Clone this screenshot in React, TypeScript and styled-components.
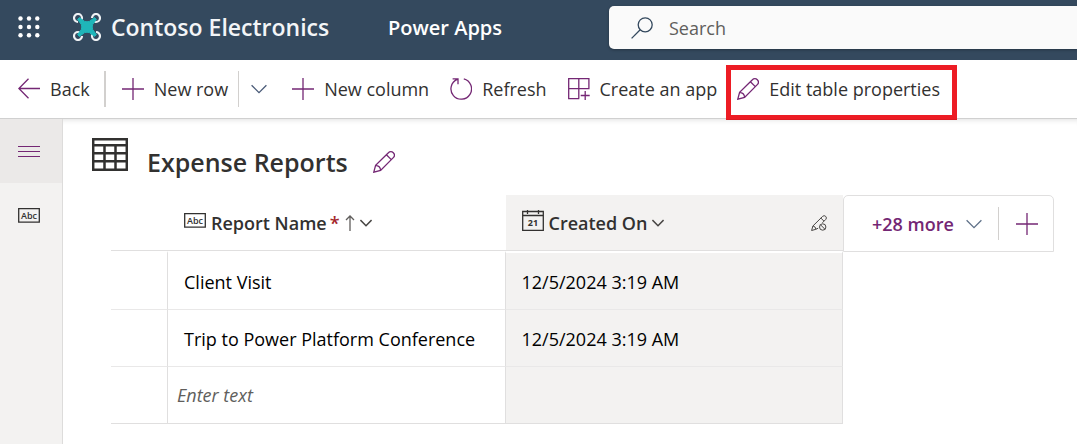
import React from "react";
import styled, { createGlobalStyle } from "styled-components";

const GlobalStyle = createGlobalStyle`
  * { box-sizing: border-box; }
  body {
    margin: 0;
    background: #ffffff;
    color: #323130;
    font-family: "Segoe UI", "Open Sans", "Noto Sans", sans-serif;
    font-size: 18px;
    line-height: 24px;
  }
  button, input { font: inherit; color: inherit; }
  button { border: 0; padding: 0; background: none; cursor: pointer; }
`;

const accent = "#742774";
const line = "#e0dfdf";

/* ---------- icons ---------- */

const Icon = styled.svg<{ $w?: number; $h?: number; $color?: string; $weight?: number }>`
  display: block;
  flex: none;
  width: ${(p) => p.$w ?? 22}px;
  height: ${(p) => p.$h ?? p.$w ?? 22}px;
  color: ${(p) => p.$color ?? accent};
  fill: none;
  stroke: currentColor;
  stroke-width: ${(p) => p.$weight ?? 1.3};
`;

const WaffleIcon = () => (
  <Icon viewBox="0 0 22 22" $color="#ffffff" aria-hidden="true">
    <g fill="currentColor" stroke="none">
      {[2.5, 11, 19.3].map((y) =>
        [2.5, 11, 19.3].map((x) => <circle key={`${x}-${y}`} cx={x} cy={y} r="2.2" />)
      )}
    </g>
  </Icon>
);

const DroneLogo = () => (
  <Icon viewBox="0 0 28 28" $w={28} $color="#eef1f4" aria-hidden="true">
    {[0, 90, 180, 270].map((angle) => (
      <path
        key={angle}
        d="M5 9A4 4 0 1 1 9 5Q9 6.2 8.2 7.2"
        strokeWidth="2.2"
        transform={`rotate(${angle} 14 14)`}
      />
    ))}
    <path
      d="M4.6 6.4 6.4 4.6 11.6 8.4Q14 9.2 16.4 8.4L21.6 4.6 23.4 6.4 19.6 11.6Q18.8 14 19.6 16.4L23.4 21.6 21.6 23.4 16.4 19.6Q14 18.8 11.6 19.6L6.4 23.4 4.6 21.6 8.4 16.4Q9.2 14 8.4 11.6Z"
      fill="#1fb5b9"
      stroke="#1fb5b9"
      strokeWidth="1"
      strokeLinejoin="round"
    />
  </Icon>
);

const SearchIcon = () => (
  <Icon viewBox="0 0 22 22" $color="#34495e" aria-hidden="true">
    <circle cx="14.2" cy="7.8" r="7" />
    <path d="M9.2 12.8.6 21.4" />
  </Icon>
);

const BackIcon = () => (
  <Icon viewBox="0 0 22 22" aria-hidden="true">
    <path d="M22 10.5H1M10.5.8.9 10.5l9.6 9.7" />
  </Icon>
);

const PlusIcon = () => (
  <Icon viewBox="0 0 22 22" aria-hidden="true">
    <path d="M11 0v22M0 11h22" />
  </Icon>
);

const ChevronIcon = ({ size = 16, color = "#4a5b78", weight = 1.3 }) => (
  <Icon viewBox="0 0 16 16" $w={size} $color={color} $weight={weight} aria-hidden="true">
    <path d="M.6 4.2 8 11.6l7.4-7.4" />
  </Icon>
);

const RefreshIcon = () => (
  <Icon viewBox="0 0 22 22" aria-hidden="true">
    <path d="M13.8.9A10.3 10.3 0 1 1 7.2 1.4M2.6.9h5.4v5.4" />
  </Icon>
);

const AppIcon = () => (
  <Icon viewBox="0 0 22 22" aria-hidden="true">
    <path d="M11.3 20.6H.7V.7h20.2v10.6M.7 10.7h20.2M10.8.7v19.9M17.2 13v9M12.7 17.5h9" />
  </Icon>
);

const PencilIcon = () => (
  <Icon viewBox="0 0 22 22" aria-hidden="true">
    <path d="M.8 21.2 2.6 14.4 15.4 1.7a3.4 3.4 0 0 1 4.9 0 3.5 3.5 0 0 1 0 4.9L7.6 19.4ZM13.4 3.7l4.9 4.9M2.6 14.4c2.7.2 4.8 2.2 5 5" />
  </Icon>
);

const MenuIcon = () => (
  <Icon viewBox="0 0 22 12" $h={12} $weight={1} aria-hidden="true">
    <path d="M0 1.5h22M0 6.5h22M0 11.5h22" />
  </Icon>
);

const TableIcon = () => (
  <Icon viewBox="0 0 36 34" $w={36} $h={34} $color="#323130" $weight={2.5} aria-hidden="true">
    <path d="M1.2 1.2h33.6v30.6H1.2ZM1 7.2h34M1 15.2h34M1 23.2h34M12.5 7v25M23.5 7v25" />
  </Icon>
);

const TextIcon = () => (
  <Icon viewBox="0 0 22 15" $h={15} $color="#323130" aria-hidden="true">
    <path d="M.7.7h20.6v13.4H.7Z" />
    <text x="11" y="11" textAnchor="middle" fontSize="9" fontWeight="600" fill="currentColor" stroke="none">
      Abc
    </text>
  </Icon>
);

const CalendarIcon = () => (
  <Icon viewBox="0 0 22 22" $color="#323130" aria-hidden="true">
    <path d="M.7 2.5h20.6v18.8H.7ZM.7 6.5h20.6M5.5 1v4M16.5 1v4" />
    <text x="11" y="17" textAnchor="middle" fontSize="9" fontWeight="700" fill="currentColor" stroke="none">
      21
    </text>
  </Icon>
);

const SortUpIcon = () => (
  <Icon viewBox="0 0 10 16" $w={10} $h={16} $color="#605e5c" aria-hidden="true">
    <path d="M5 16V1M1 5l4-4 4 4" />
  </Icon>
);

const ReadOnlyIcon = () => (
  <Icon viewBox="0 0 16 16" $w={16} $color="#484644" $weight={1} aria-hidden="true">
    <path d="M7.2 13.2 4.8 14.3.6 15.5 1.9 11 11.6 1.4a2.2 2.2 0 0 1 3.1 0 2.2 2.2 0 0 1 0 3.1L11.4 7.8M9.9 3.1l3.1 3.1M1.9 11c1.6.2 2.8 1.4 2.9 3.3" />
    <circle cx="11.7" cy="12" r="3.2" />
    <path d="m9.5 9.8 4.4 4.4" />
  </Icon>
);

/* ---------- top bar ---------- */

const TopBar = styled.header`
  display: flex;
  align-items: center;
  height: 60px;
  padding-left: 18px;
  background: #34495e;
  color: #ffffff;
`;

const Waffle = styled.button`
  margin-right: 33px;
  padding-bottom: 6px;
`;

const Brand = styled.a`
  display: flex;
  align-items: center;
  gap: 10px;
  width: 315px;
  padding-bottom: 6px;
  color: #f3f5f7;
  font-size: 23px;
  font-weight: 600;
  line-height: 32px;
  text-decoration: none;
  white-space: nowrap;
`;

const Product = styled.a`
  width: 221px;
  padding-bottom: 4px;
  color: #ffffff;
  font-size: 20px;
  font-weight: 600;
  line-height: 28px;
  text-decoration: none;
  white-space: nowrap;
`;

const SearchBox = styled.label`
  display: flex;
  flex: 1;
  align-items: center;
  gap: 16px;
  height: 43px;
  margin-bottom: 5px;
  padding-left: 22px;
  border-radius: 5px 0 0 5px;
  background: #fafafa;
  box-shadow: 0 1px 3px rgba(0, 0, 0, 0.3);
`;

const SearchInput = styled.input`
  flex: 1;
  min-width: 0;
  padding: 0;
  border: 0;
  outline: 0;
  background: transparent;
  color: #323130;
  &::placeholder { color: #605e5c; opacity: 1; }
`;

/* ---------- command bar ---------- */

const CommandBar = styled.nav`
  display: flex;
  align-items: center;
  height: 59px;
  padding-left: 7px;
  border-bottom: 1px solid #d0d0d0;
`;

const Command = styled.button`
  display: flex;
  flex: none;
  align-items: center;
  gap: 10px;
  height: 45px;
  padding: 0 10px 0 11px;
  white-space: nowrap;
`;

const SplitCommand = styled(Command)`
  padding: 0 14px 0 12px;
`;

const MarkedCommand = styled(Command)`
  margin: 8px 0 2px 4px;
  padding: 0 12px 6px 6px;
  outline: 5px solid #ed1c24;
`;

const Divider = styled.span<{ $h?: number }>`
  flex: none;
  width: 1px;
  height: ${(p) => p.$h ?? 36}px;
  background: #d2d0ce;
`;

const GroupDivider = styled(Divider)`
  width: 2px;
  margin: 0 5px 0 4px;
`;

/* ---------- body ---------- */

const Body = styled.div`
  display: flex;
  min-height: calc(100vh - 119px);
`;

const Rail = styled.aside`
  flex: none;
  width: 63px;
  border-right: 1px solid #dddcdb;
  background: #f3f2f1;
`;

const RailButton = styled.button<{ $active?: boolean }>`
  display: flex;
  align-items: center;
  justify-content: center;
  width: 100%;
  height: 64px;
  padding-right: 4px;
  background: ${(p) => (p.$active ? "#ebe9e8" : "transparent")};
`;

const Main = styled.main`
  flex: 1;
  min-width: 0;
  padding: 19px 23px 20px 29px;
  box-shadow: inset 0 6px 6px -6px rgba(0, 0, 0, 0.16);
`;

const TitleRow = styled.div`
  display: flex;
  align-items: flex-start;
  height: 57px;
`;

const Title = styled.h1`
  margin: 6px 25px 0 19px;
  font-size: 25px;
  font-weight: 600;
  line-height: 36px;
  white-space: nowrap;
`;

const TitleEdit = styled.button`
  margin-top: 13px;
`;

const GridArea = styled.div`
  display: flex;
  align-items: flex-start;
  padding-left: 19px;
`;

const Table = styled.table`
  flex: 1;
  width: 0;
  table-layout: fixed;
  border-collapse: separate;
  border-spacing: 0;
`;

const SelectCol = styled.col`
  width: 57px;
`;

const HeadCell = styled.th<{ $shaded?: boolean }>`
  height: 56px;
  padding: 0 16px;
  border-bottom: 1px solid ${line};
  background: ${(p) => (p.$shaded ? "#f3f2f1" : "#ffffff")};
  font-weight: 600;
  text-align: left;
`;

const HeadContent = styled.div`
  display: flex;
  align-items: center;
  gap: 5px;
  white-space: nowrap;
`;

const HeadIcon = styled.span`
  padding-bottom: 5px;
`;

const Required = styled.span`
  margin-left: -2px;
  color: #a4262c;
`;

const HeadEnd = styled.span`
  margin-left: auto;
`;

const Cell = styled.td<{ $shaded?: boolean }>`
  height: 57px;
  padding: 2px 16px 0;
  border-right: 1px solid ${line};
  border-bottom: 1px solid #e9e8e8;
  background: ${(p) => (p.$shaded ? "#f3f2f1" : "#ffffff")};
  color: #000000;
  white-space: nowrap;
  tr:first-child > & { height: 59px; border-top: 2px solid #ffffff; }
  tr:last-child > & { border-bottom-color: ${line}; }
`;

const NewCell = styled(Cell)`
  padding: 0 9px;
`;

const CellInput = styled.input`
  display: block;
  width: 100%;
  padding: 0;
  border: 0;
  outline: 0;
  background: transparent;
  &::placeholder { color: #605e5c; font-style: italic; opacity: 1; }
`;

const MorePanel = styled.div`
  display: flex;
  flex: none;
  align-items: center;
  width: 211px;
  height: 57px;
  border: 1px solid ${line};
  border-radius: 5px 5px 0 0;
`;

const MoreButton = styled.button`
  display: flex;
  flex: 1;
  align-items: center;
  justify-content: space-between;
  padding: 0 16px 0 28px;
  color: ${accent};
  font-weight: 600;
  white-space: nowrap;
`;

const AddButton = styled.button`
  padding: 0 15px 0 17px;
`;

const rows = [
  { name: "Client Visit", created: "12/5/2024 3:19 AM" },
  { name: "Trip to Power Platform Conference", created: "12/5/2024 3:19 AM" },
];

export default function App() {
  return (
    <>
      <GlobalStyle />
      <TopBar>
        <Waffle aria-label="App launcher"><WaffleIcon /></Waffle>
        <Brand href="#"><DroneLogo />Contoso Electronics</Brand>
        <Product href="#">Power Apps</Product>
        <SearchBox>
          <SearchIcon />
          <SearchInput type="search" placeholder="Search" aria-label="Search" />
        </SearchBox>
      </TopBar>

      <CommandBar aria-label="Commands">
        <Command><BackIcon />Back</Command>
        <GroupDivider />
        <Command><PlusIcon />New row</Command>
        <Divider />
        <SplitCommand aria-label="More row options"><ChevronIcon /></SplitCommand>
        <Command><PlusIcon />New column</Command>
        <Command><RefreshIcon />Refresh</Command>
        <Command><AppIcon />Create an app</Command>
        <MarkedCommand><PencilIcon />Edit table properties</MarkedCommand>
      </CommandBar>

      <Body>
        <Rail>
          <RailButton $active aria-label="Menu"><MenuIcon /></RailButton>
          <RailButton aria-label="Columns"><TextIcon /></RailButton>
        </Rail>
        <Main>
          <TitleRow>
            <TableIcon />
            <Title>Expense Reports</Title>
            <TitleEdit aria-label="Edit table name"><PencilIcon /></TitleEdit>
          </TitleRow>
          <GridArea>
            <Table>
              <colgroup>
                <SelectCol />
                <col />
                <col />
              </colgroup>
              <thead>
                <tr>
                  <HeadCell aria-label="Select" />
                  <HeadCell>
                    <HeadContent>
                      <HeadIcon><TextIcon /></HeadIcon>
                      <span>Report Name</span>
                      <Required>*</Required>
                      <SortUpIcon />
                      <ChevronIcon size={12} color="#484644" weight={2} />
                    </HeadContent>
                  </HeadCell>
                  <HeadCell $shaded>
                    <HeadContent>
                      <HeadIcon><CalendarIcon /></HeadIcon>
                      <span>Created On</span>
                      <ChevronIcon size={12} color="#484644" weight={2} />
                      <HeadEnd><ReadOnlyIcon /></HeadEnd>
                    </HeadContent>
                  </HeadCell>
                </tr>
              </thead>
              <tbody>
                {rows.map((row) => (
                  <tr key={row.name}>
                    <Cell />
                    <Cell>{row.name}</Cell>
                    <Cell $shaded>{row.created}</Cell>
                  </tr>
                ))}
                <tr>
                  <Cell />
                  <NewCell><CellInput placeholder="Enter text" aria-label="Report Name" /></NewCell>
                  <Cell $shaded />
                </tr>
              </tbody>
            </Table>
            <MorePanel>
              <MoreButton>+28 more<ChevronIcon color="#5f7188" /></MoreButton>
              <Divider $h={33} />
              <AddButton aria-label="Add column"><PlusIcon /></AddButton>
            </MorePanel>
          </GridArea>
        </Main>
      </Body>
    </>
  );
}
